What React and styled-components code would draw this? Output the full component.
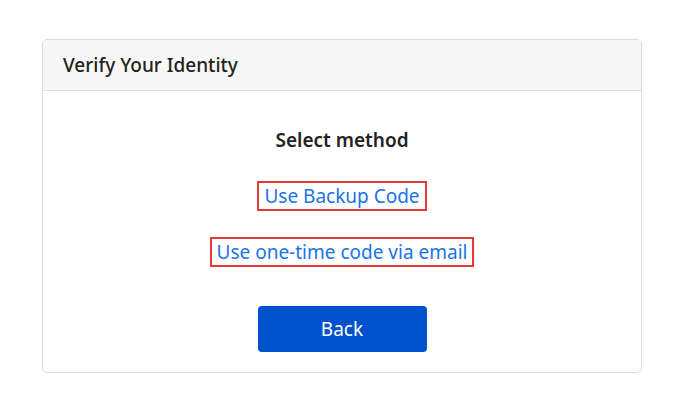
import React from "react";
import styled, { createGlobalStyle } from "styled-components";

const Global = createGlobalStyle`
  html, body { margin: 0; padding: 0; background: #ffffff; }
  body { font-family: "Noto Sans", "Open Sans", "Liberation Sans", sans-serif; }
  * { box-sizing: border-box; }
`;

const Page = styled.div`
  padding: 39px 0 0 42px;
`;

const Card = styled.section`
  width: 600px;
  border: 1px solid #dcdcdc;
  border-radius: 5px;
  overflow: hidden;
  background: #fff;
`;

const Header = styled.header`
  height: 51px;
  display: flex;
  align-items: center;
  padding: 0 20px;
  background: #f7f7f7;
  border-bottom: 1px solid #dcdcdc;
  font-size: 19px;
  font-weight: 500;
  color: #222;
`;

const Body = styled.div`
  display: flex;
  flex-direction: column;
  align-items: center;
  padding: 36px 20px 20px;
`;

const Heading = styled.div`
  font-size: 19px;
  font-weight: 600;
  color: #222;
  line-height: 26px;
`;

const MethodLink = styled.a`
  display: inline-block;
  margin-top: ${(p) => p.$gap}px;
  padding: 0 5px;
  border: 2px solid #e53935;
  color: #1a73e8;
  font-size: 19px;
  line-height: 26px;
  text-decoration: none;
  cursor: pointer;
`;

const BackButton = styled.button`
  margin-top: 39px;
  width: 169px;
  height: 46px;
  border: none;
  border-radius: 4px;
  background: #0052cc;
  color: #fff;
  font-family: inherit;
  font-size: 19px;
  cursor: pointer;
`;

export default function App() {
  return (
    <>
      <Global />
      <Page>
        <Card>
          <Header>Verify Your Identity</Header>
          <Body>
            <Heading>Select method</Heading>
            <MethodLink $gap={28}>Use Backup Code</MethodLink>
            <MethodLink $gap={26}>Use one-time code via email</MethodLink>
            <BackButton>Back</BackButton>
          </Body>
        </Card>
      </Page>
    </>
  );
}
